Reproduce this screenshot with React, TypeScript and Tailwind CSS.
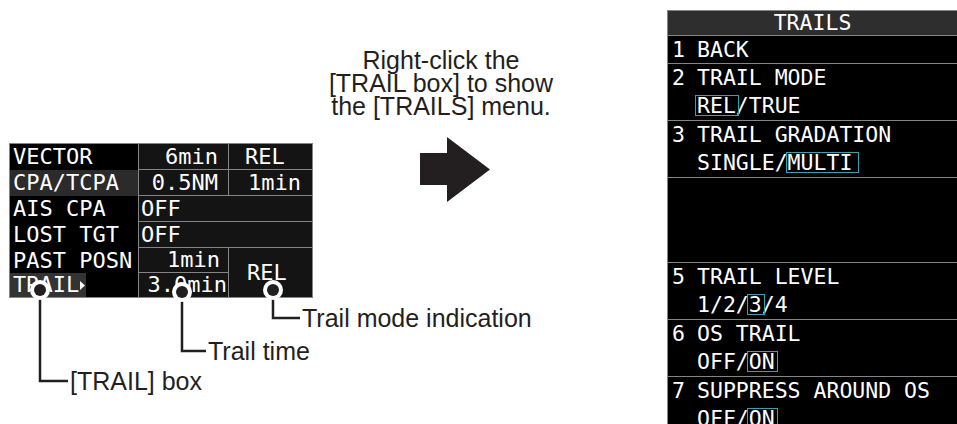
import React from "react";

function Sel({ children, wide }: { children: React.ReactNode; wide?: boolean }) {
  return (
    <span className="relative">
      {children}
      <span
        className={
          wide
            ? "absolute -left-[2px] -right-[7px] top-[2px] bottom-[2px] border-[1.5px] border-[#35a2ad]"
            : "absolute -left-[2px] -right-[3px] top-[2px] bottom-[2px] border-[1.5px] border-[#35a2ad]"
        }
      />
    </span>
  );
}

function MenuItem({ n, lines, h }: { n?: string; lines: React.ReactNode[]; h: string }) {
  return (
    <div className={`flex border-b border-[#858585] ${h}`}>
      <span className="w-[29px] shrink-0 pl-[4px] leading-[28px]">{n}</span>
      <div>
        {lines.map((l, i) => (
          <div key={i} className="h-[28px] whitespace-pre leading-[28px]">
            {l}
          </div>
        ))}
      </div>
    </div>
  );
}

function TrailsMenu() {
  return (
    <div className="mt-[10px] h-[430px] w-[290px] shrink-0 border-l border-t border-[#858585] bg-black font-['DejaVu_Sans_Mono',monospace] text-[21.5px] text-white">
      <div className="h-[25px] border-b border-[#858585] bg-[#2e2e2e] text-center leading-[24px]">TRAILS</div>
      <MenuItem n="1" h="h-[28px]" lines={["BACK"]} />
      <MenuItem
        n="2"
        h="h-[57px]"
        lines={[
          "TRAIL MODE",
          <>
            <Sel>REL</Sel>/TRUE
          </>,
        ]}
      />
      <MenuItem
        n="3"
        h="h-[57px]"
        lines={[
          "TRAIL GRADATION",
          <>
            SINGLE/<Sel wide>MULTI</Sel>
          </>,
        ]}
      />
      <MenuItem h="h-[85px]" lines={[]} />
      <MenuItem
        n="5"
        h="h-[57px]"
        lines={[
          "TRAIL LEVEL",
          <>
            1/2/<Sel>3</Sel>/4
          </>,
        ]}
      />
      <MenuItem
        n="6"
        h="h-[57px]"
        lines={[
          "OS TRAIL",
          <>
            OFF/<Sel>ON</Sel>
          </>,
        ]}
      />
      <MenuItem
        n="7"
        h="h-[57px]"
        lines={[
          "SUPPRESS AROUND OS",
          <>
            OFF/<Sel>ON</Sel>
          </>,
        ]}
      />
    </div>
  );
}

function Cell({ children, className }: { children?: React.ReactNode; className?: string }) {
  return <div className={`flex items-center bg-[#141414] ${className ?? ""}`}>{children}</div>;
}

function TargetTable() {
  return (
    <div className="flex w-[304px] border border-[#858585] bg-black font-['DejaVu_Sans_Mono',monospace] text-[22px] leading-none text-white">
      <div className="grid w-[129px] shrink-0 grid-rows-[26px_26px_26px_26px_25px_24px] border-r border-[#858585]">
        <div className="flex items-center pl-[3px]">VECTOR</div>
        <div className="flex items-center bg-[#2b2b2b] pl-[3px]">CPA/TCPA</div>
        <div className="flex items-center pl-[3px]">AIS CPA</div>
        <div className="flex items-center pl-[3px]">LOST TGT</div>
        <div className="flex items-center pl-[3px]">PAST POSN</div>
        <div className="flex">
          <span className="flex w-[76px] items-center bg-[#333] pl-[3px]">
            TRAIL
            <svg width="7" height="11" viewBox="0 0 7 11" className="ml-[1px]">
              <path d="M0 0L6 5.5L0 11Z" fill="#fff" />
            </svg>
          </span>
        </div>
      </div>
      <div className="grid flex-1 grid-cols-[89px_1fr] grid-rows-[25px_25px_25px_25px_24px_24px] gap-px bg-[#858585]">
        <Cell className="justify-end pr-[10px]">6min</Cell>
        <Cell className="pl-[16px]">REL</Cell>
        <Cell className="justify-end pr-[10px]">0.5NM</Cell>
        <Cell className="justify-end pr-[11px]">1min</Cell>
        <Cell className="col-span-2 pl-[2px]">OFF</Cell>
        <Cell className="col-span-2 pl-[2px]">OFF</Cell>
        <Cell className="justify-end pr-[8px]">1min</Cell>
        <Cell className="row-span-2 pl-[18px]">REL</Cell>
        <Cell className="justify-end pr-[1px]">3.0min</Cell>
      </div>
    </div>
  );
}

function Callouts() {
  const dots = [
    [40, 290],
    [182, 292],
    [273, 290],
  ];
  return (
    <svg className="pointer-events-none absolute left-0 top-0" width="957" height="424" viewBox="0 0 957 424">
      <g fill="none" stroke="#231f20" strokeWidth="2.5">
        <path d="M40 290V381H68" />
        <path d="M182 292V351H206" />
        <path d="M273 290V318H300" />
      </g>
      {dots.map(([x, y]) => (
        <g key={x}>
          <circle cx={x} cy={y} r="10" fill="#fff" />
          <circle cx={x} cy={y} r="6" fill="#231f20" />
        </g>
      ))}
    </svg>
  );
}

export default function App() {
  return (
    <div className="relative flex h-[424px] w-[957px] overflow-hidden bg-white font-['Liberation_Sans',Arial,sans-serif] text-[#231f20]">
      <div className="ml-[9px] mt-[143px] w-[304px] shrink-0">
        <TargetTable />
        <div className="mt-[5px] whitespace-nowrap text-[25px] leading-[30px]">
          <div className="h-[33px] pl-[293px]">Trail mode indication</div>
          <div className="h-[30px] pl-[199px]">Trail time</div>
          <div className="h-[30px] pl-[61px]">[TRAIL] box</div>
        </div>
      </div>
      <div className="w-[354px] shrink-0">
        <div className="-ml-[3px] w-[262px] pt-[49px] text-center text-[25px] leading-[23px]">
          <div>Right-click the</div>
          <div>[TRAIL box] to show</div>
          <div>the [TRAILS] menu.</div>
        </div>
        <svg className="ml-[107px] mt-[19px] block" width="71" height="66" viewBox="0 0 71 66">
          <path d="M0 16H27V0L70 32.5L27 65V48H0Z" fill="#231f20" />
        </svg>
      </div>
      <TrailsMenu />
      <Callouts />
    </div>
  );
}
